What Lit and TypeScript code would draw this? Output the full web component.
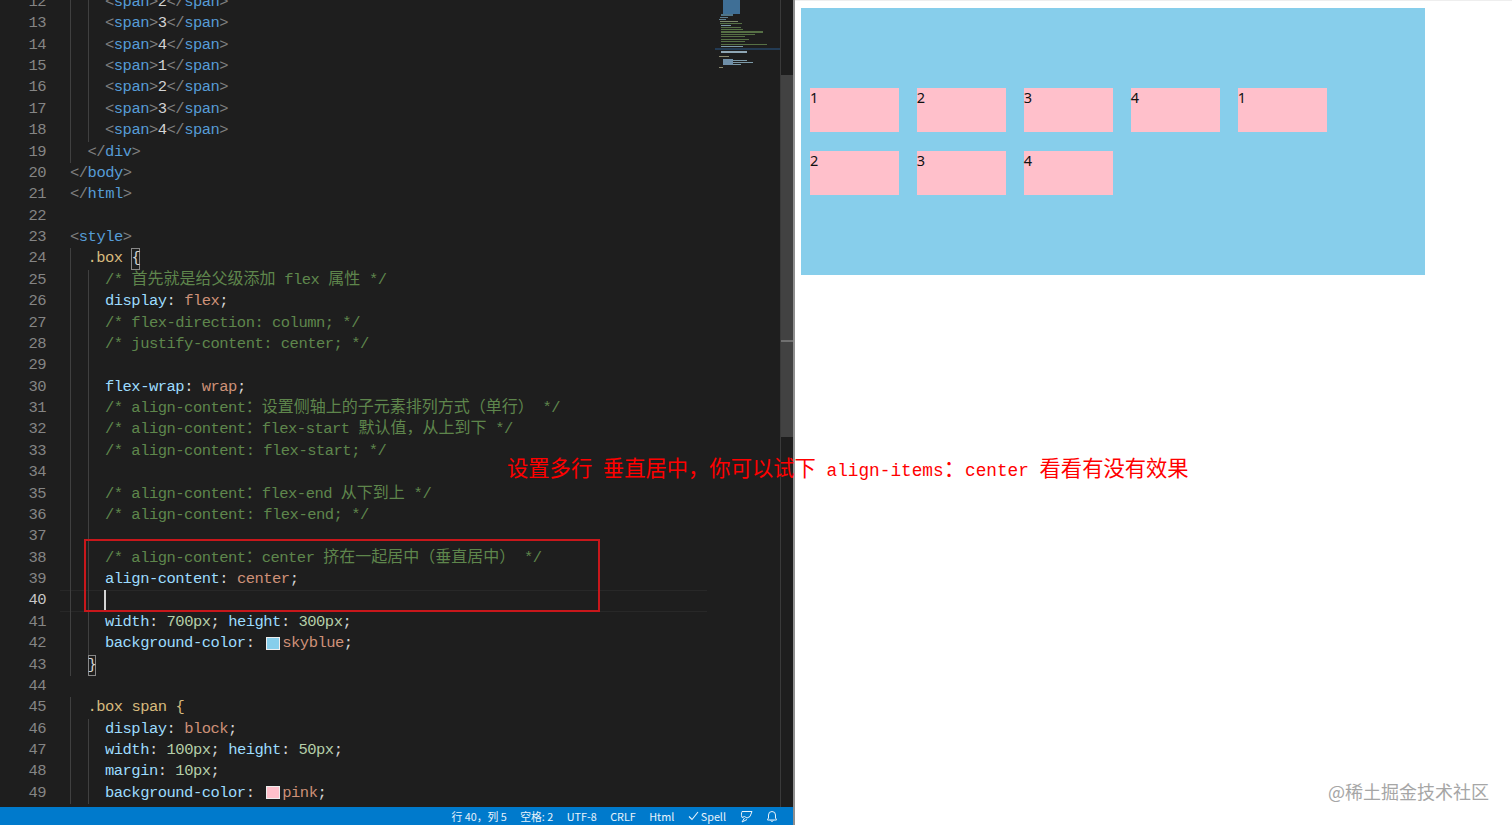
import { LitElement, html, css, TemplateResult } from "lit";
import { customElement } from "lit/decorators.js";

type Tok = [string, string];
type Line = { n: number; ind: number; t: Tok[]; cur?: boolean };

const tag = (d: string, close = false): Tok[] => [["p", close ? "</" : "<"], ["t", d], ["p", ">"]];
const spanLine = (n: number, v: string): Line => ({
  n, ind: 2, t: [...tag("span"), ["w", v], ...tag("span", true)],
});
const c = (n: number, s: string, ind = 2): Line => ({ n, ind, t: [["c", s]] });
const decl = (n: number, parts: Tok[]): Line => ({ n, ind: 2, t: parts });

const LINES: Line[] = [
  spanLine(12, "2"), spanLine(13, "3"), spanLine(14, "4"), spanLine(15, "1"),
  spanLine(16, "2"), spanLine(17, "3"), spanLine(18, "4"),
  { n: 19, ind: 1, t: tag("div", true) },
  { n: 20, ind: 0, t: tag("body", true) },
  { n: 21, ind: 0, t: tag("html", true) },
  { n: 22, ind: 0, t: [] },
  { n: 23, ind: 0, t: tag("style") },
  { n: 24, ind: 1, t: [["s", ".box "], ["bm", "{"]] },
  c(25, "/* 首先就是给父级添加 flex 属性 */"),
  decl(26, [["k", "display"], ["w", ": "], ["v", "flex"], ["w", ";"]]),
  c(27, "/* flex-direction: column; */"),
  c(28, "/* justify-content: center; */"),
  { n: 29, ind: 2, t: [] },
  decl(30, [["k", "flex-wrap"], ["w", ": "], ["v", "wrap"], ["w", ";"]]),
  c(31, "/* align-content：设置侧轴上的子元素排列方式（单行） */"),
  c(32, "/* align-content：flex-start 默认值，从上到下 */"),
  c(33, "/* align-content: flex-start; */"),
  { n: 34, ind: 2, t: [] },
  c(35, "/* align-content：flex-end 从下到上 */"),
  c(36, "/* align-content: flex-end; */"),
  { n: 37, ind: 2, t: [] },
  c(38, "/* align-content：center 挤在一起居中（垂直居中） */"),
  decl(39, [["k", "align-content"], ["w", ": "], ["v", "center"], ["w", ";"]]),
  { n: 40, ind: 2, t: [], cur: true },
  decl(41, [["k", "width"], ["w", ": "], ["n", "700px"], ["w", "; "], ["k", "height"], ["w", ": "], ["n", "300px"], ["w", ";"]]),
  decl(42, [["k", "background-color"], ["w", ": "], ["sw1", ""], ["v", "skyblue"], ["w", ";"]]),
  { n: 43, ind: 1, t: [["bm", "}"]] },
  { n: 44, ind: 0, t: [] },
  { n: 45, ind: 1, t: [["s", ".box span "], ["w2", "{"]] },
  decl(46, [["k", "display"], ["w", ": "], ["v", "block"], ["w", ";"]]),
  decl(47, [["k", "width"], ["w", ": "], ["n", "100px"], ["w", "; "], ["k", "height"], ["w", ": "], ["n", "50px"], ["w", ";"]]),
  decl(48, [["k", "margin"], ["w", ": "], ["n", "10px"], ["w", ";"]]),
  decl(49, [["k", "background-color"], ["w", ": "], ["sw2", ""], ["v", "pink"], ["w", ";"]]),
];

const MINI: [number, number, number, number, string][] = [
  [0, 6, 17, 14, "#3f6f96"],
  [14, 4, 12, 2, "#4f7488"], [17, 3, 8, 1, "#5f7f90"], [19, 2, 7, 1, "#5f7f90"],
  [21, 3, 18, 1, "#7d8a6a"], [23, 3, 22, 1, "#567045"], [25, 4, 10, 1, "#7d9aa8"],
  [27, 4, 20, 1, "#567045"], [29, 4, 22, 1, "#567045"], [31, 4, 42, 2, "#567045"],
  [34, 4, 34, 1, "#567045"], [36, 4, 24, 1, "#567045"], [39, 4, 28, 1, "#567045"],
  [41, 4, 24, 1, "#567045"], [44, 4, 46, 1, "#567045"], [46, 4, 22, 1, "#7d9aa8"],
  [51, 4, 26, 2, "#8fa6b4"],
  [56, 2, 10, 1, "#8a8a70"], [59, 6, 10, 6, "#6f8fa8"], [60, 16, 14, 1, "#7d9aa8"],
  [62, 16, 20, 1, "#7d9aa8"], [64, 16, 8, 1, "#7d9aa8"], [67, 2, 4, 1, "#8a8a70"],
];

const splitCjk = (s: string) =>
  s.split(/([\u3000-\u9fff\uff00-\uffef]+)/).map((p, i) =>
    i % 2 ? html`<span class="cjk">${p}</span>` : p
  );

@customElement("app-root")
export class AppRoot extends LitElement {
  static styles = css`
    :host { display: block; width: 1512px; height: 825px; overflow: hidden; position: relative; background: #fff; }
    .page { display: flex; width: 1512px; height: 825px; }
    .ide { width: 793px; height: 825px; display: flex; flex-direction: column; background: #1e1e1e; flex: none; }
    .main { flex: 1; min-height: 0; display: flex; overflow: hidden; position: relative; }
    .code { flex: 1; min-width: 0; margin-top: -8.1px; font: 15.5px/21.39px "Liberation Mono", monospace; letter-spacing: -0.51px; color: #d4d4d4; }
    .line { height: 21.39px; display: flex; white-space: pre; position: relative; }
    .num { width: 46px; text-align: right; color: #858585; flex: none; }
    .line.cur .num { color: #c6c6c6; }
    .body { margin-left: 24px; display: flex; flex: 1; }
    .line.cur .body { box-shadow: inset 0 1px 0 #282828, inset 0 -1px 0 #282828; margin-right: 8px; margin-left: 14px; padding-left: 10px; }
    .ind { width: 17.5px; flex: none; box-shadow: inset 1px 0 0 #404040; }
    .p { color: #808080; } .t { color: #569cd6; } .w { color: #d4d4d4; }
    .c { color: #6a9955; opacity: .85; } .k { color: #9cdcfe; } .v { color: #ce9178; } .n { color: #b5cea8; }
    .s { color: #d7ba7d; }
    .w2 { color: #d7ba7d; }
    .bm { color: #d4d4d4; box-shadow: inset 0 0 0 1px #888; }
    .cjk { font: 16px/0 "Noto Sans CJK SC", sans-serif; letter-spacing: 0; }
    .sw { display: block; width: 14px; height: 13px; border: 1px solid #eee; box-sizing: border-box; margin: 3.5px 2px 0 3px; flex: none; }
    .sw1 { background: #87ceeb; } .sw2 { background: #ffc0cb; }
    .caret { width: 2px; height: 21px; background: #d4d4d4; margin-left: -1px; }
    .mini { width: 65px; flex: none; position: relative; }
    .mini i { position: absolute; display: block; }
    .mini .hl { position: absolute; left: 0; right: 0; top: 48px; height: 2px; background: #264f78; opacity: .6; }
    .rail { width: 13px; flex: none; border-left: 1px solid #3a3a3a; box-sizing: border-box; position: relative; }
    .thumb { position: absolute; left: 0; right: 0; top: 75px; height: 362px; background: #424242; }
    .mark { position: absolute; left: 0; right: 0; top: 340px; height: 2px; background: #707070; }
    .status { height: 18px; flex: none; background: #007acc; color: #e8f2fa; display: flex; justify-content: flex-end; align-items: center; gap: 13.5px; padding-right: 15px; font: 10.8px/18px "Noto Sans CJK SC", sans-serif; }
    .status svg { display: block; }
    .spell { display: flex; align-items: center; gap: 2px; }
    .edge { width: 2px; flex: none; background: #8f8f8f; }
    .view { flex: 1; position: relative; padding: 8px 0 0 6px; box-shadow: inset 0 1px 0 #eee; }
    .box { width: 624px; height: 267px; display: flex; flex-wrap: wrap; align-content: center; background: #87ceeb; }
    .box span { display: block; width: 89.2px; height: 44.4px; margin: 9.2px 8.9px; background: #ffc0cb; color: #111; font: 14.5px/18px "Noto Sans", sans-serif; }
    .note { position: absolute; left: 507px; top: 453px; color: #f00; white-space: pre; font: 21.3px/28px "Noto Sans CJK SC", sans-serif; }
    .note b { font: 400 17.75px/28px "Liberation Mono", monospace; }
    .frame { position: absolute; left: 84px; top: 539px; width: 516px; height: 73px; box-sizing: border-box; border: 2px solid #c8171b; }
    .mark-w { position: absolute; left: 1328px; top: 778px; color: #a6a6a6; font: 18px/26px "Noto Sans CJK SC", sans-serif; }
  `;

  private tok(t: Tok): TemplateResult {
    const [k, s] = t;
    if (k === "sw1" || k === "sw2") return html`<span class="sw ${k}"></span>`;
    return html`<span class=${k}>${splitCjk(s)}</span>`;
  }

  render() {
    return html`
      <div class="page">
        <div class="ide">
          <div class="main">
            <div class="code">
              ${LINES.map((l) => html`
                <div class="line ${l.cur ? "cur" : ""}">
                  <div class="num">${l.n}</div>
                  <div class="body">
                    ${Array.from({ length: l.ind }, () => html`<span class="ind"></span>`)}
                    ${l.cur ? html`<span class="caret"></span>` : ""}
                    ${l.t.map((t) => this.tok(t))}
                  </div>
                </div>`)}
            </div>
            <div class="mini">
              ${MINI.map(([y, x, w, h, col]) => html`<i style="top:${y}px;left:${x + 2}px;width:${w}px;height:${h}px;background:${col}"></i>`)}
              <div class="hl"></div>
            </div>
            <div class="rail"><div class="thumb"></div><div class="mark"></div></div>
          </div>
          <div class="status">
            <span>行 40，列 5</span>
            <span>空格: 2</span>
            <span>UTF-8</span>
            <span>CRLF</span>
            <span>Html</span>
            <span class="spell"><svg width="11" height="10" viewBox="0 0 11 10" fill="none" stroke="#e8f2fa" stroke-width="1.1"><path d="M1 5.500 4 8.500 10 1"/></svg>Spell</span>
            <svg width="13" height="13" viewBox="0 0 13 13" fill="none" stroke="#e8f2fa" stroke-width="1"><path d="M2 1.500H12L10 6.500 7 8 4.500 6.500 2 7.500C1 5 1.500 3 2 1.500ZM4.500 8 2 12 7 9.500"/></svg>
            <svg width="12" height="13" viewBox="0 0 12 13" fill="none" stroke="#e8f2fa" stroke-width="1"><path d="M1.500 10V9.500L2.500 8V5a3.500 3.500 0 0 1 7 0v3l1 1.500V10zM4.700 10.500a1.400 1.400 0 0 0 2.600 0"/></svg>
          </div>
        </div>
        <div class="edge"></div>
        <div class="view">
          <div class="box">
            ${["1", "2", "3", "4", "1", "2", "3", "4"].map((d) => html`<span>${d}</span>`)}
          </div>
        </div>
      </div>
      <div class="frame"></div>
      <div class="note">设置多行<b> </b>垂直居中，你可以试下<b> align-items</b>：<b>center </b>看看有没有效果</div>
      <div class="mark-w">@稀土掘金技术社区</div>
    `;
  }
}
